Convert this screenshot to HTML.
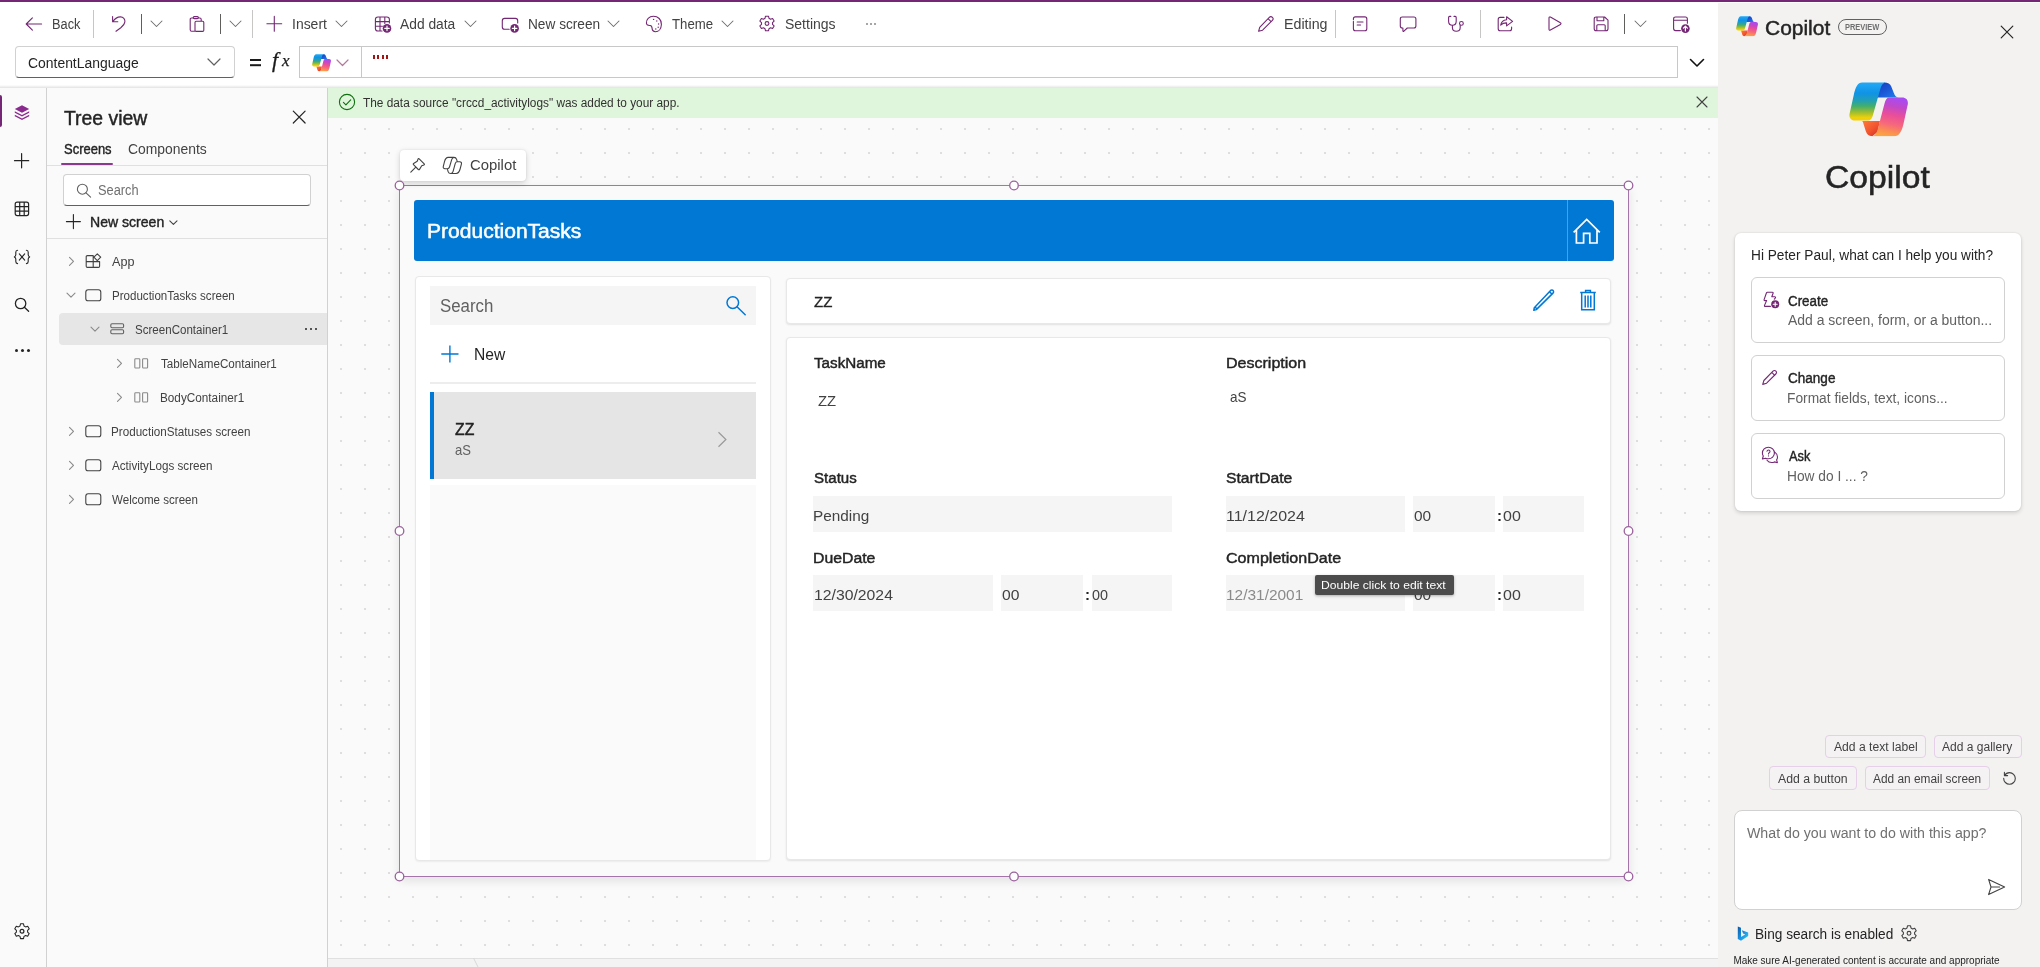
<!DOCTYPE html>
<html>
<head>
<meta charset="utf-8">
<title>Power Apps Studio</title>
<style>
*{box-sizing:border-box;margin:0;padding:0}
html,body{width:2040px;height:967px;overflow:hidden;background:#fff;font-family:"Liberation Sans",sans-serif;color:#242424}
.a{position:absolute}
.t{position:absolute;white-space:nowrap;line-height:1;transform-origin:0 0}
svg{position:absolute;overflow:visible}
.pi{fill:none;stroke:#742774;stroke-width:1.1;stroke-linecap:round;stroke-linejoin:round}
.gi{fill:none;stroke:#424242;stroke-width:1.2;stroke-linecap:round;stroke-linejoin:round}
.vsep{position:absolute;width:1px;background:#c8c6c4}
/* regions */
#topbar{left:0;top:0;width:2040px;height:2px;background:#742774}
#cmd{left:0;top:3px;width:1718px;height:43px;background:#fff}
#fx{left:0;top:46px;width:1718px;height:40px;background:#fff}
#rail{left:0;top:88px;width:47px;height:879px;background:#fafafa;border-right:1px solid #d1d1d1}
#tree{left:47px;top:88px;width:281px;height:879px;background:#fafafa;border-right:1px solid #d1d1d1}
#canvas{left:328px;top:88px;width:1390px;height:879px;background-color:#fafafa;background-image:radial-gradient(circle,#d2d2d2 0.55px,rgba(210,210,210,0) 1.05px);background-size:24px 24px;background-position:1px 5px}
#cop{left:1718px;top:3px;width:322px;height:964px;background:#f3f2f1}
</style>
</head>
<body>
<div id="root" style="position:absolute;left:0;top:0;width:2040px;height:967px;will-change:transform">
<div class="a" id="cmd"></div>
<div class="a" id="fx"></div>
<div class="a" id="rail"></div>
<div class="a" id="tree"></div>
<div class="a" id="canvas"></div>
<div class="a" id="cop"></div>
<div class="a" id="topbar"></div>
<!--CMD-->
<div id="cmdbar">
<!-- Back -->
<svg style="left:24px;top:14px" width="20" height="20" viewBox="0 0 20 20"><path class="pi" d="M17.6 10H2.6M8.4 3.8L2.2 10l6.2 6.2"/></svg>
<div class="t" style="left:51.5px;top:17px;font-size:14px;color:#424242;transform:scaleX(0.913)" id="tBack">Back</div>
<div class="vsep" style="left:93px;top:10px;height:28px"></div>
<!-- Undo -->
<svg style="left:109px;top:14px" width="20" height="20" viewBox="0 0 20 20"><path class="pi" d="M3.6 2.6v5.2h5.2M3.9 7.6c1.6-2.4 3.8-4.6 7.4-4.7 3-.1 4.9 2.300 4.600 5-.3 2.600-2.200 4.400-4.100 5.900L7 17.300"/></svg>
<div class="vsep" style="left:141px;top:14px;height:20px;background:#605e5c"></div>
<svg style="left:150px;top:20px" width="13" height="8" viewBox="0 0 13 8"><path class="gi" style="stroke:#6e6e6e;stroke-width:1.050" d="M1 1l5.500 5.500L12 1"/></svg>
<!-- Paste -->
<svg style="left:187px;top:14px" width="20" height="20" viewBox="0 0 20 20"><path class="pi" d="M6 4H4.600C3.700 4 3.200 4.500 3.200 5.400v10.400c0 .9.500 1.400 1.400 1.400H7.600M11.400 4h1.400c.9 0 1.400.5 1.400 1.400V6.800M7.200 2.600h3.200c.7 0 1 .4 1 1s-.3 1-1 1H7.200c-.7 0-1-.4-1-1s.3-1 1-1zM9.200 7.200h6.400c.8 0 1.200.4 1.200 1.200v7.800c0 .8-.4 1.200-1.200 1.200H9.200c-.8 0-1.200-.4-1.200-1.200V8.400c0-.8.400-1.200 1.200-1.200z"/></svg>
<div class="vsep" style="left:220px;top:14px;height:20px;background:#605e5c"></div>
<svg style="left:229px;top:20px" width="13" height="8" viewBox="0 0 13 8"><path class="gi" style="stroke:#6e6e6e;stroke-width:1.050" d="M1 1l5.500 5.500L12 1"/></svg>
<div class="vsep" style="left:252px;top:10px;height:28px"></div>
<!-- Insert -->
<svg style="left:264px;top:14px" width="20" height="20" viewBox="0 0 20 20"><path class="pi" d="M10.300 2.400v14.800M2.900 9.800h14.800"/></svg>
<div class="t" style="left:292.1px;top:17px;font-size:14px;color:#424242;transform:scaleX(0.997)" id="tInsert">Insert</div>
<svg style="left:335px;top:20px" width="13" height="8" viewBox="0 0 13 8"><path class="gi" style="stroke:#6e6e6e;stroke-width:1.050" d="M1 1l5.500 5.500L12 1"/></svg>
<!-- Add data -->
<svg style="left:373px;top:14px" width="20" height="20" viewBox="0 0 20 20"><path class="pi" d="M9 17H5c-1.700 0-2.600-.9-2.600-2.600V5.600C2.400 3.900 3.300 3 5 3h8.800c1.700 0 2.600.9 2.600 2.600V9M2.400 7.600h14M2.400 12.200h7M7 3v14M11.800 3v6.500"/><circle cx="14" cy="14.400" r="4.300" fill="#742774"/><path d="M14 12.200v4.400M11.800 14.400h4.400" stroke="#fff" stroke-width="1.200" stroke-linecap="round" fill="none"/></svg>
<div class="t" style="left:399.6px;top:17px;font-size:14px;color:#424242;transform:scaleX(0.986)" id="tAdd">Add data</div>
<svg style="left:464px;top:20px" width="13" height="8" viewBox="0 0 13 8"><path class="gi" style="stroke:#6e6e6e;stroke-width:1.050" d="M1 1l5.500 5.500L12 1"/></svg>
<!-- New screen -->
<svg style="left:500px;top:14px" width="20" height="20" viewBox="0 0 20 20"><path class="pi" d="M9.200 15.200H4.600c-1.500 0-2.300-.8-2.300-2.300V6.700c0-1.500.8-2.300 2.300-2.300h10.800c1.500 0 2.300.8 2.300 2.300V9"/><circle cx="14.600" cy="14.400" r="4.300" fill="#742774"/><path d="M14.600 12.200v4.400M12.400 14.400h4.400" stroke="#fff" stroke-width="1.200" stroke-linecap="round" fill="none"/></svg>
<div class="t" style="left:527.6px;top:17px;font-size:14px;color:#424242;transform:scaleX(0.976)" id="tNew">New screen</div>
<svg style="left:607px;top:20px" width="13" height="8" viewBox="0 0 13 8"><path class="gi" style="stroke:#6e6e6e;stroke-width:1.050" d="M1 1l5.500 5.500L12 1"/></svg>
<!-- Theme -->
<svg style="left:644px;top:14px" width="20" height="20" viewBox="0 0 20 20"><path class="pi" d="M2.400 9.200C2 5.400 5.200 2.200 9.400 2.200c4.600 0 8.200 3.400 8 8.200-.2 4.200-2.600 7.300-5.900 7.300-2.400 0-3.300-1.600-3.400-3.300-.1-1.700-.3-2.700-1.900-2.900-1.700-.2-3.600-.1-3.800-2.300z"/><circle cx="9.600" cy="5.400" r=".7" fill="#742774"/><circle cx="12.800" cy="7" r=".7" fill="#742774"/><circle cx="14.600" cy="10" r=".7" fill="#742774"/><circle cx="14.200" cy="13.200" r=".7" fill="#742774"/><circle cx="11.800" cy="15" r=".7" fill="#742774"/></svg>
<div class="t" style="left:672.0px;top:17px;font-size:14px;color:#424242;transform:scaleX(0.942)" id="tTheme">Theme</div>
<svg style="left:721px;top:20px" width="13" height="8" viewBox="0 0 13 8"><path class="gi" style="stroke:#6e6e6e;stroke-width:1.050" d="M1 1l5.500 5.500L12 1"/></svg>
<!-- Settings -->
<svg style="left:757px;top:14px" width="20" height="20" viewBox="0 0 20 20"><path class="pi" id="gearp" d="M8.500 2.200h3l.5 2.100 1.500.9 2.100-.7 1.500 2.600-1.600 1.500v1.800l1.600 1.500-1.500 2.600-2.100-.7-1.500.9-.5 2.100h-3l-.5-2.100-1.500-.9-2.100.7-1.500-2.600 1.600-1.500V8.600L2.900 7.100l1.500-2.600 2.100.7L8 4.300z"/><circle class="pi" cx="10" cy="9.500" r="1.900"/></svg>
<div class="t" style="left:785.0px;top:17px;font-size:14px;color:#424242;transform:scaleX(1.000)" id="tSet">Settings</div>
<div class="a" style="left:866px;top:23px;width:2px;height:2px;border-radius:1px;background:#8a8886;box-shadow:4px 0 0 #8a8886,8px 0 0 #8a8886"></div>
<!-- Editing -->
<svg style="left:1256px;top:14px" width="20" height="20" viewBox="0 0 20 20"><path class="pi" d="M13.300 3.300c.9-.9 2.200-.9 3.100 0s.9 2.200 0 3.100L6.600 16.200l-4 1.100 1.100-4zM12 4.600l3.100 3.100"/></svg>
<div class="t" style="left:1283.6px;top:17px;font-size:14px;color:#424242;transform:scaleX(1.017)" id="tEdit">Editing</div>
<div class="vsep" style="left:1335px;top:10px;height:28px"></div>
<!-- notes -->
<svg style="left:1350px;top:14px" width="20" height="20" viewBox="0 0 20 20"><path class="pi" d="M3.400 5.600v-.7c0-1.300.7-2 2-2h9.400c1.300 0 2 .7 2 2v9.800c0 1.300-.7 2-2 2H5.400c-1.300 0-2-.7-2-2V7.400M7.200 8h5.800M7.200 11h3.400"/></svg>
<!-- comment -->
<svg style="left:1398px;top:14px" width="20" height="20" viewBox="0 0 20 20"><path class="pi" d="M4.300 3h11.600c1.300 0 2 .7 2 2v7c0 1.300-.7 2-2 2H9.300l-3.400 3.200c-.5.400-1 .2-1-.4V14h-.6c-1.300 0-2-.7-2-2V5c0-1.300.7-2 2-2z"/></svg>
<!-- stethoscope -->
<svg style="left:1446px;top:14px" width="20" height="20" viewBox="0 0 20 20"><path class="pi" d="M4.800 2.400H3.600c-.7 0-1 .3-1 1v3.800c0 2.400 1.600 4 3.800 4s3.800-1.600 3.800-4V3.400c0-.7-.3-1-1-1H8M6.400 11.200v2.200c0 2.300 1.600 3.800 3.900 3.800s3.900-1.500 3.900-3.800v-2"/><circle class="pi" cx="15.400" cy="9.400" r="1.900"/></svg>
<div class="vsep" style="left:1480px;top:10px;height:28px"></div>
<!-- share -->
<svg style="left:1495px;top:14px" width="20" height="20" viewBox="0 0 20 20"><path class="pi" d="M9 3.400H5.200c-1.300 0-2 .7-2 2v9.400c0 1.300.7 2 2 2h9.400c1.300 0 2-.7 2-2V13M11.600 2.800v3c-3.300.2-5.400 2.100-5.900 5.400 1.600-1.700 3.500-2.400 5.900-2.300v3l6-4.500z"/></svg>
<!-- play -->
<svg style="left:1544px;top:14px" width="20" height="20" viewBox="0 0 20 20"><path class="pi" d="M5 3.900c0-.8.700-1.200 1.400-.8l10 5.600c.8.400.8 1.400 0 1.800l-10 5.600c-.7.400-1.400 0-1.400-.8z"/></svg>
<!-- save -->
<svg style="left:1591px;top:14px" width="20" height="20" viewBox="0 0 20 20"><path class="pi" d="M5.200 3h8.400l3.400 3.200v8.600c0 1.300-.7 2-2 2H5.200c-1.300 0-2-.7-2-2V5c0-1.300.7-2 2-2zM6 3v3.800h6.800V3M5.800 16.800v-5c0-.7.400-1 1-1h6.400c.7 0 1 .3 1 1v5"/></svg>
<div class="vsep" style="left:1624px;top:14px;height:20px;background:#605e5c"></div>
<svg style="left:1634px;top:20px" width="13" height="8" viewBox="0 0 13 8"><path class="gi" style="stroke:#6e6e6e;stroke-width:1.050" d="M1 1l5.500 5.500L12 1"/></svg>
<!-- publish -->
<svg style="left:1671px;top:14px" width="20" height="20" viewBox="0 0 20 20"><path class="pi" d="M9.400 16.600H4.600c-1.300 0-2-.7-2-2V5c0-1.300.7-2 2-2h9.800c1.300 0 2 .7 2 2v4.200M2.600 6.200h13.800"/><circle cx="14.400" cy="14.600" r="4.300" fill="#742774"/><path d="M14.400 17v-4.600M12.400 14.200l2-2 2 2" stroke="#fff" stroke-width="1.200" stroke-linecap="round" stroke-linejoin="round" fill="none"/></svg>
</div>

<!--FX-->
<svg width="0" height="0" style="left:0;top:0"><defs>
<linearGradient id="gB" x1="0" y1="0" x2="0" y2="1"><stop offset="0" stop-color="#22a9f6"/><stop offset=".28" stop-color="#0f93e6"/><stop offset=".48" stop-color="#22a0b4"/><stop offset=".62" stop-color="#42ae6e"/><stop offset=".78" stop-color="#9cbd30"/><stop offset=".92" stop-color="#ecd00c"/><stop offset="1" stop-color="#f6d000"/></linearGradient>
<linearGradient id="gA" x1="0" y1="0" x2="1" y2="1"><stop offset="0" stop-color="#1538b8"/><stop offset=".6" stop-color="#1c5fdc"/><stop offset="1" stop-color="#1f86ea"/></linearGradient>
<linearGradient id="gD" x1=".6" y1="0" x2=".4" y2="1"><stop offset="0" stop-color="#a84bf2"/><stop offset=".22" stop-color="#c248c8"/><stop offset=".45" stop-color="#ea4f97"/><stop offset=".68" stop-color="#f6687c"/><stop offset=".88" stop-color="#fb9050"/><stop offset="1" stop-color="#fca440"/></linearGradient>
<linearGradient id="gC" x1="0" y1="0" x2="1" y2="1"><stop offset="0" stop-color="#ff7c3c"/><stop offset=".55" stop-color="#f2552e"/><stop offset="1" stop-color="#cf2a26"/></linearGradient>
<symbol id="coplogo" viewBox="0 0 60 55.600">
<path fill="url(#gA)" d="M36 .4C39.500 .4 42 2 43 4.500L45.500 11C46.500 13.800 47.500 15.600 50.500 15.900H27L31 3z"/>
<path fill="url(#gC)" d="M13.300 39.600H31.500L29 51L23.700 55.200C20 55.200 18 53 17 50L15 43.500C14.500 41.500 14 40 13.300 39.600z"/>
<path fill="url(#gB)" d="M13.300 .4H37C34.500 1 33 3 32 6.500L24.500 33C23.500 37 22 39.300 18.500 39.300H6C2 39.300-.2 36.500.5 32.500L4.800 13.300C6.500 5 9 .4 13.300 .4z"/>
<path fill="url(#gD)" d="M40.500 15.900H54C58.500 15.900 60.500 19 59.800 23L55.500 42.500C53.500 51 51 55.200 46 55.200H23.700C26.500 54.500 28 52.500 29 49L36 22.500C37 18.500 38.500 15.900 40.500 15.900z"/>
</symbol>
</defs></svg>
<div class="a" style="left:0;top:85px;width:1718px;height:3px;background:linear-gradient(#fff,#e2e2e2)"></div>
<div class="a" style="left:15px;top:46px;width:220px;height:32px;border:1px solid #d1d1d1;border-bottom-color:#616161;border-radius:4px;background:#fff"></div>
<div class="t" style="left:27.6px;top:56px;font-size:14px;color:#242424;transform:scaleX(0.994)" id="tCL">ContentLanguage</div>
<svg style="left:207px;top:58px" width="14" height="9" viewBox="0 0 14 9"><path class="gi" style="stroke:#616161" d="M1 1l6 6 6-6"/></svg>
<div class="a" style="left:249.500px;top:59.300px;width:11.500px;height:1.800px;background:#1b1b1b;box-shadow:0 5.200px 0 #1b1b1b"></div>
<div class="t" style="left:272px;top:49px;font-family:'Liberation Serif',serif;font-style:italic;font-size:22px;color:#1b1b1b;-webkit-text-stroke:.3px #1b1b1b" id="tF">f</div>
<div class="t" style="left:282px;top:51.500px;font-family:'Liberation Serif',serif;font-style:italic;font-size:17px;color:#1b1b1b;-webkit-text-stroke:.25px #1b1b1b" id="tX">x</div>
<div class="a" style="left:299px;top:46px;width:1379px;height:32px;border:1px solid #c8c8c8;background:#fff"></div>
<div class="a" style="left:361px;top:47px;width:1px;height:30px;background:#c8c8c8"></div>
<svg style="left:312px;top:54px" width="19" height="17.600"><use href="#coplogo"/></svg>
<svg style="left:336px;top:59px" width="13" height="8" viewBox="0 0 13 8"><path d="M1 1l5.500 5.500L12 1" fill="none" stroke="#b4789c" stroke-width="1.200" stroke-linecap="round" stroke-linejoin="round"/></svg>
<div class="a" style="left:373px;top:55px;width:2px;height:4px;background:#a31515;box-shadow:4px 0 0 #a31515,9px 0 0 #a31515,13px 0 0 #a31515"></div>
<svg style="left:1689px;top:58px" width="16" height="10" viewBox="0 0 16 10"><path d="M1.500 1.500L8 8l6.500-6.500" fill="none" stroke="#111" stroke-width="1.600" stroke-linecap="round" stroke-linejoin="round"/></svg>

<!--RAIL-->
<div class="a" style="left:0;top:95px;width:2px;height:32px;background:#742774;border-radius:0 2px 2px 0"></div>
<svg style="left:14px;top:105px" width="16" height="16" viewBox="0 0 16 16"><path fill="#8a2a8e" d="M8 .3l7.200 3.700L8 7.700.8 4zM.8 6.300L8 10l7.200-3.700v1.500L8 11.500.8 7.800zM.8 9.800L8 13.500l7.200-3.700v1.500L8 15 .8 11.300z"/></svg>
<svg style="left:13px;top:152px" width="18" height="18" viewBox="0 0 18 18"><path class="gi" style="stroke:#242424" d="M8.600 1.600v14.200M1.500 8.700h14.200"/></svg>
<svg style="left:14px;top:201px" width="16" height="16" viewBox="0 0 16 16"><path class="gi" style="stroke:#242424" d="M3.200 1.200h9.400c1.300 0 2 .7 2 2v9.400c0 1.300-.7 2-2 2H3.200c-1.300 0-2-.7-2-2V3.200c0-1.300.7-2 2-2zM1.200 5.700h13.400M1.200 10.200h13.400M5.700 1.200v13.400M10.200 1.200v13.400"/></svg>
<svg style="left:13px;top:249px" width="18" height="16" viewBox="0 0 18 16"><path class="gi" style="stroke:#242424;stroke-width:1.100" d="M4.600 1.200C3.200 1.200 2.800 2 2.800 3.200v2.600c0 1-.5 1.700-1.500 2.100 1 .4 1.500 1.100 1.500 2.100v2.600c0 1.200.4 2 1.800 2M13.400 1.200c1.400 0 1.800.8 1.800 2v2.600c0 1 .5 1.700 1.500 2.100-1 .4-1.500 1.100-1.500 2.100v2.600c0 1.200-.4 2-1.800 2M6.300 4.800l5.400 6.300M11.700 4.800l-5.400 6.300"/></svg>
<svg style="left:14px;top:297px" width="16" height="16" viewBox="0 0 16 16"><circle class="gi" style="stroke:#242424;stroke-width:1.300" cx="6.600" cy="6.500" r="5.200"/><path class="gi" style="stroke:#242424;stroke-width:1.300" d="M10.400 10.300l4.200 4"/></svg>
<div class="a" style="left:15px;top:349px;width:3px;height:3px;border-radius:2px;background:#242424;box-shadow:6px 0 0 #242424,12px 0 0 #242424"></div>
<svg style="left:12px;top:922px" width="20" height="20" viewBox="0 0 20 20"><path class="gi" style="stroke:#242424;stroke-width:1.050" d="M8.500 1.800h3l.5 2.200 1.600.9 2.100-.7 1.500 2.600-1.600 1.500v1.800l1.600 1.500-1.500 2.600-2.100-.7-1.600.9-.5 2.200h-3l-.5-2.200-1.600-.9-2.100.7-1.500-2.600 1.600-1.500V8.300L2.800 6.800l1.500-2.600 2.100.7L8 4z"/><circle class="gi" style="stroke:#242424" cx="10" cy="9.300" r="1.900"/></svg>

<!--TREE-->
<div class="t" style="left:63.6px;top:108px;font-size:20px;color:#242424;-webkit-text-stroke:.45px #242424;transform:scaleX(0.969)" id="tTV">Tree view</div>
<svg style="left:292px;top:110px" width="14" height="14" viewBox="0 0 14 14"><path class="gi" style="stroke:#242424;stroke-width:1.200" d="M1.300 1.200l11.800 11.800M13.100 1.200L1.300 13"/></svg>
<div class="t" style="left:63.6px;top:142px;font-size:14px;color:#242424;-webkit-text-stroke:.4px #242424;transform:scaleX(0.927)" id="tScr">Screens</div>
<div class="t" style="left:128.4px;top:142px;font-size:14px;color:#424242;transform:scaleX(0.992)" id="tCmp">Components</div>
<div class="a" style="left:61px;top:163px;width:52px;height:2px;background:#8a3a8e;border-radius:1px"></div>
<div class="a" style="left:47px;top:165px;width:280px;height:1px;background:#e0e0e0"></div>
<div class="a" style="left:63px;top:174px;width:248px;height:32px;border:1px solid #d1d1d1;border-bottom-color:#616161;border-radius:4px;background:#fff"></div>
<svg style="left:76px;top:183px" width="16" height="16" viewBox="0 0 16 16"><circle class="gi" style="stroke:#616161;stroke-width:1.100" cx="6.400" cy="6.200" r="5"/><path class="gi" style="stroke:#616161;stroke-width:1.100" d="M10 9.800l4.600 4.400"/></svg>
<div class="t" style="left:97.8px;top:183px;font-size:14px;color:#707070;transform:scaleX(0.916)" id="tSrch">Search</div>
<svg style="left:65px;top:213px" width="17" height="17" viewBox="0 0 17 17"><path class="gi" style="stroke:#242424;stroke-width:1.100" d="M8.400 1.600v14M1.400 8.600h14"/></svg>
<div class="t" style="left:89.6px;top:215px;font-size:14px;color:#242424;-webkit-text-stroke:.4px #242424;transform:scaleX(1.004)" id="tNS2">New screen</div>
<svg style="left:169px;top:220px" width="9" height="6" viewBox="0 0 9 6"><path class="gi" style="stroke:#424242;stroke-width:1.100" d="M.8.800l3.600 3.600L8 .8"/></svg>
<div class="a" style="left:47px;top:238px;width:280px;height:1px;background:#e0e0e0"></div>
<!-- rows -->
<div class="a" style="left:59px;top:313px;width:268px;height:32px;background:#e6e6e6;border-radius:4px 0 0 4px"></div>
<!-- row1 App -->
<svg style="left:68px;top:256px" width="7" height="11" viewBox="0 0 7 11"><path class="gi" style="stroke:#8a8a8a;stroke-width:1.100" d="M1.500 1.400l4 4-4 4"/></svg>
<svg style="left:85px;top:253px" width="17" height="16" viewBox="0 0 17 16"><path class="gi" style="stroke:#424242;stroke-width:1.100" d="M8.200 2.600H2.400c-.8 0-1.200.4-1.200 1.200v9.400c0 .8.400 1.200 1.200 1.200h11c.8 0 1.200-.4 1.200-1.200V8.600M1.200 8.600h13.400M8.200 2.600v11.800M12.300.8l3.400 3.400-3.400 3.400-3.400-3.400z"/></svg>
<div class="t" style="left:111.6px;top:256px;font-size:12px;color:#424242;transform:scaleX(1.050)" id="tApp">App</div>
<!-- row2 -->
<svg style="left:66px;top:292px" width="10" height="7" viewBox="0 0 10 7"><path class="gi" style="stroke:#8a8a8a;stroke-width:1.100" d="M1 1.200l4 4 4-4"/></svg>
<svg style="left:85px;top:289px" width="17" height="13" viewBox="0 0 17 13"><rect class="gi" style="stroke:#424242;stroke-width:1.100" x=".8" y=".8" width="15" height="11" rx="2.400"/></svg>
<div class="t" style="left:112.0px;top:290px;font-size:12px;color:#424242;transform:scaleX(0.964)" id="tPT">ProductionTasks screen</div>
<!-- row3 -->
<svg style="left:90px;top:326px" width="10" height="7" viewBox="0 0 10 7"><path class="gi" style="stroke:#8a8a8a;stroke-width:1.100" d="M1 1.200l4 4 4-4"/></svg>
<svg style="left:110px;top:323px" width="15" height="12" viewBox="0 0 15 12"><rect class="gi" style="stroke:#616161;stroke-width:1.100" x=".8" y=".8" width="12.800" height="4" rx="1.200"/><rect class="gi" style="stroke:#616161;stroke-width:1.100" x=".8" y="6.800" width="12.800" height="4" rx="1.200"/></svg>
<div class="t" style="left:135.2px;top:324px;font-size:12px;color:#424242;transform:scaleX(0.964)" id="tSC">ScreenContainer1</div>
<div class="a" style="left:305px;top:328px;width:2px;height:2px;border-radius:1px;background:#242424;box-shadow:5px 0 0 #242424,10px 0 0 #242424"></div>
<!-- row4 -->
<svg style="left:116px;top:358px" width="7" height="11" viewBox="0 0 7 11"><path class="gi" style="stroke:#8a8a8a;stroke-width:1.100" d="M1.500 1.400l4 4-4 4"/></svg>
<svg style="left:134px;top:358px" width="15" height="11" viewBox="0 0 15 11"><rect class="gi" style="stroke:#8a8a8a;stroke-width:1.100" x=".8" y=".8" width="5" height="9.200" rx=".8"/><rect class="gi" style="stroke:#8a8a8a;stroke-width:1.100" x="8.600" y=".8" width="5" height="9.200" rx=".8"/></svg>
<div class="t" style="left:160.8px;top:358px;font-size:12px;color:#424242;transform:scaleX(0.970)" id="tTN">TableNameContainer1</div>
<!-- row5 -->
<svg style="left:116px;top:392px" width="7" height="11" viewBox="0 0 7 11"><path class="gi" style="stroke:#8a8a8a;stroke-width:1.100" d="M1.500 1.400l4 4-4 4"/></svg>
<svg style="left:134px;top:392px" width="15" height="11" viewBox="0 0 15 11"><rect class="gi" style="stroke:#8a8a8a;stroke-width:1.100" x=".8" y=".8" width="5" height="9.200" rx=".8"/><rect class="gi" style="stroke:#8a8a8a;stroke-width:1.100" x="8.600" y=".8" width="5" height="9.200" rx=".8"/></svg>
<div class="t" style="left:159.8px;top:392px;font-size:12px;color:#424242;transform:scaleX(0.979)" id="tBC">BodyContainer1</div>
<!-- row6 -->
<svg style="left:68px;top:426px" width="7" height="11" viewBox="0 0 7 11"><path class="gi" style="stroke:#8a8a8a;stroke-width:1.100" d="M1.500 1.400l4 4-4 4"/></svg>
<svg style="left:85px;top:425px" width="17" height="13" viewBox="0 0 17 13"><rect class="gi" style="stroke:#424242;stroke-width:1.100" x=".8" y=".8" width="15" height="11" rx="2.400"/></svg>
<div class="t" style="left:111.4px;top:426px;font-size:12px;color:#424242;transform:scaleX(0.972)" id="tPS">ProductionStatuses screen</div>
<!-- row7 -->
<svg style="left:68px;top:460px" width="7" height="11" viewBox="0 0 7 11"><path class="gi" style="stroke:#8a8a8a;stroke-width:1.100" d="M1.500 1.400l4 4-4 4"/></svg>
<svg style="left:85px;top:459px" width="17" height="13" viewBox="0 0 17 13"><rect class="gi" style="stroke:#424242;stroke-width:1.100" x=".8" y=".8" width="15" height="11" rx="2.400"/></svg>
<div class="t" style="left:112.4px;top:460px;font-size:12px;color:#424242;transform:scaleX(0.972)" id="tAL">ActivityLogs screen</div>
<!-- row8 -->
<svg style="left:68px;top:494px" width="7" height="11" viewBox="0 0 7 11"><path class="gi" style="stroke:#8a8a8a;stroke-width:1.100" d="M1.500 1.400l4 4-4 4"/></svg>
<svg style="left:85px;top:493px" width="17" height="13" viewBox="0 0 17 13"><rect class="gi" style="stroke:#424242;stroke-width:1.100" x=".8" y=".8" width="15" height="11" rx="2.400"/></svg>
<div class="t" style="left:112.4px;top:494px;font-size:12px;color:#424242;transform:scaleX(0.964)" id="tWS">Welcome screen</div>

<!--CANVAS-->
<div class="a" style="left:328px;top:88px;width:1390px;height:30px;background:#dff6dd"></div>
<svg style="left:338px;top:93px" width="18" height="18" viewBox="0 0 18 18"><circle cx="9" cy="9" r="7.600" fill="none" stroke="#0e700e" stroke-width="1.100"/><path d="M5.400 9.300l2.500 2.500 4.800-5" fill="none" stroke="#0e700e" stroke-width="1.100" stroke-linecap="round" stroke-linejoin="round"/></svg>
<div class="t" style="left:363.4px;top:97px;font-size:12px;color:#323130;transform:scaleX(0.987)" id="tNote">The data source "crccd_activitylogs" was added to your app.</div>
<svg style="left:1696px;top:96px" width="12" height="12" viewBox="0 0 12 12"><path class="gi" style="stroke:#424242;stroke-width:1.100" d="M1 1l10 10M11 1L1 11"/></svg>
<div class="a" style="left:328px;top:958px;width:1390px;height:9px;background:#f3f3f3;border-top:1px solid #e0e0e0"></div>
<svg style="left:470px;top:958px" width="10" height="9" viewBox="0 0 10 9"><path d="M3.500 0L8 9" stroke="#d8d8d8" stroke-width="1" fill="none"/></svg>
<!-- app screen -->
<div class="a" style="left:399px;top:185px;width:1230px;height:692px;background:#fafafa;border:1px solid #a574a8;box-shadow:0 4px 10px rgba(0,0,0,.10)"></div>
<!-- floating toolbar -->
<div class="a" style="left:400px;top:150px;width:126px;height:31px;background:#fff;border-radius:4px;box-shadow:0 2px 6px rgba(0,0,0,.16),0 0 2px rgba(0,0,0,.10)"></div>
<svg style="left:409px;top:157px" width="17" height="17" viewBox="0 0 17 17"><path class="gi" style="stroke:#424242;stroke-width:1.100" d="M10.200 1.800l5 5c.4.400.3.900-.2 1.100l-2.300.9-2.200 3.600c-.3.500-.8.500-1.200.1L4.500 7.700c-.4-.4-.4-.9.100-1.200l3.600-2.200.9-2.300c.2-.5.700-.6 1.100-.2zM6.800 10.200l-5 5"/></svg>
<svg style="left:443px;top:156px" width="19" height="19" viewBox="0 0 19 19"><path class="gi" style="stroke:#424242;stroke-width:1.100" d="M5.200 1.400h5.800c1.300 0 2.200.7 2.600 1.900l.7 2.400h2.400c1.400 0 2.100 1 1.700 2.400l-1.300 4.900c-.7 2.700-1.700 4.500-4 4.500H7.800c-1.300 0-2.300-.7-2.700-1.900l-.8-2.900H2c-1.400 0-2.100-1-1.700-2.400l1.200-4.700C2.200 2.900 3.300 1.400 5.200 1.400zM11 1.400c-1.200 0-1.900.9-2.300 2.200L6.500 11c-.3 1.100-1 1.700-2.200 1.700M7.800 17.500c1.200 0 1.900-.9 2.300-2.200l2.100-7.700c.3-1.100 1-1.900 2.200-1.900"/></svg>
<div class="t" style="left:469.5px;top:158px;font-size:14px;color:#424242;transform:scaleX(1.062)" id="tCop1">Copilot</div>

<!--APP-->
<div id="app">
<div class="a" style="left:414px;top:200px;width:1200px;height:61px;background:#0078d4;border-radius:3px"></div>
<div class="a" style="left:1567px;top:200px;width:1px;height:61px;background:#4aa0e4"></div>
<div class="t" style="left:427.2px;top:221.3px;font-size:20px;color:#fff;-webkit-text-stroke:.5px #fff;transform:scaleX(1.052)" id="tPTh">ProductionTasks</div>
<svg style="left:1572px;top:217px" width="30" height="28" viewBox="0 0 30 28"><path d="M2.200 14.800L14.700 2.400l12.500 12.400M4.400 13v13h7.200v-9.600h6.200V26H25V13" fill="none" stroke="#fff" stroke-width="1.700" stroke-linejoin="miter" stroke-linecap="square"/></svg>
<!-- left panel -->
<div class="a" style="left:415px;top:276px;width:356px;height:585px;background:#fff;border:1px solid #e8e8e8;border-radius:4px;box-shadow:0 1px 2px rgba(0,0,0,.06)"></div>
<div class="a" style="left:430px;top:286px;width:326px;height:39px;background:#f5f5f5"></div>
<div class="t" style="left:440.0px;top:298px;font-size:17.500px;color:#616161;transform:scaleX(0.963)" id="tS2">Search</div>
<svg style="left:725px;top:295px" width="22" height="22" viewBox="0 0 22 22"><circle cx="7.800" cy="7.600" r="5.800" fill="none" stroke="#0078d4" stroke-width="1.500"/><path d="M12 11.800l8.200 8" fill="none" stroke="#0078d4" stroke-width="1.500" stroke-linecap="round"/></svg>
<svg style="left:440px;top:344px" width="20" height="20" viewBox="0 0 20 20"><path d="M9.900 1.400v17.200M1.300 10h17.200" fill="none" stroke="#0078d4" stroke-width="1.400"/></svg>
<div class="t" style="left:473.7px;top:346px;font-size:17px;color:#242424;transform:scaleX(0.918)" id="tNew2">New</div>
<div class="a" style="left:430px;top:382px;width:326px;height:2px;background:#ededed"></div>
<div class="a" style="left:430px;top:392px;width:326px;height:87px;background:#e5e5e5"></div>
<div class="a" style="left:430px;top:392px;width:4px;height:87px;background:#0078d4"></div>
<div class="t" style="left:455.0px;top:420.6px;font-size:17px;color:#242424;-webkit-text-stroke:.5px #242424;transform:scaleX(0.929)" id="tZZ1">ZZ</div>
<div class="t" style="left:455.0px;top:443px;font-size:14.500px;color:#616161;transform:scaleX(0.900)" id="taS1">aS</div>
<svg style="left:717px;top:431px" width="11" height="17" viewBox="0 0 11 17"><path d="M1.500 1.300l7.400 7.200-7.400 7.200" fill="none" stroke="#9a9a9a" stroke-width="1.200"/></svg>
<div class="a" style="left:430px;top:485px;width:326px;height:375px;background:#fafafa"></div>
<!-- title panel -->
<div class="a" style="left:786px;top:277.500px;width:825px;height:46px;background:#fff;border:1px solid #e8e8e8;border-radius:4px;box-shadow:0 1px 2px rgba(0,0,0,.10)"></div>
<div class="t" style="left:813.7px;top:293.6px;font-size:15.5px;color:#242424;-webkit-text-stroke:.35px #242424;transform:scaleX(0.968)" id="tZZ2">ZZ</div>
<svg style="left:1531px;top:288px" width="25" height="25" viewBox="0 0 25 25"><path d="M19.600 2.400c.8-.7 1.900-.6 2.600.2.600.8.500 1.800-.2 2.500L5.300 21.600l-2.500.7.500-2.600zM18.400 3.600l2.600 2.700M4 19l2 2" fill="none" stroke="#0078d4" stroke-width="1.500" stroke-linejoin="round" stroke-linecap="round"/></svg>
<svg style="left:1579px;top:289px" width="18" height="23" viewBox="0 0 18 23"><path d="M1.200 3.400h15.600M6.600 3.200V1.600h4.800v1.600M2.700 3.600v17.200h12.600V3.600M6.200 6.400v12M9 6.400v12M11.800 6.400v12" fill="none" stroke="#0078d4" stroke-width="1.500"/></svg>
<!-- form panel -->
<div class="a" style="left:786px;top:337px;width:825px;height:523px;background:#fff;border:1px solid #e8e8e8;border-radius:4px;box-shadow:0 1px 2px rgba(0,0,0,.10)"></div>
<div class="t" style="left:813.7px;top:355.3px;font-size:15.5px;color:#242424;-webkit-text-stroke:.45px #242424;transform:scaleX(0.981)" id="tTN2">TaskName</div>
<div class="t" style="left:817.6px;top:393.2px;font-size:15.5px;color:#424242;transform:scaleX(0.956)" id="tZZ3">ZZ</div>
<div class="t" style="left:1225.9px;top:355.3px;font-size:15.5px;color:#242424;-webkit-text-stroke:.45px #242424;transform:scaleX(1.034)" id="tDesc">Description</div>
<div class="t" style="left:1230.2px;top:388.8px;font-size:15px;color:#424242;transform:scaleX(0.900)" id="taS2">aS</div>
<div class="t" style="left:813.6px;top:469.7px;font-size:15.5px;color:#242424;-webkit-text-stroke:.45px #242424;transform:scaleX(0.973)" id="tStat">Status</div>
<div class="a" style="left:813px;top:496px;width:359px;height:36px;background:#f5f5f5"></div>
<div class="t" style="left:813.2px;top:508.1px;font-size:15.5px;color:#424242;transform:scaleX(0.989)" id="tPend">Pending</div>
<div class="t" style="left:1226.2px;top:469.7px;font-size:15.5px;color:#242424;-webkit-text-stroke:.45px #242424;transform:scaleX(1.012)" id="tSD">StartDate</div>
<div class="a" style="left:1226px;top:496px;width:179px;height:36px;background:#f5f5f5"></div>
<div class="a" style="left:1413px;top:496px;width:82px;height:36px;background:#f5f5f5"></div>
<div class="a" style="left:1503px;top:496px;width:81px;height:36px;background:#f5f5f5"></div>
<div class="t" style="left:1226.0px;top:508.1px;font-size:15.5px;color:#424242;transform:scaleX(1.031)" id="tD1">11/12/2024</div>
<div class="t" style="left:1413.7px;top:508.1px;font-size:15.5px;color:#424242;transform:scaleX(0.994)" id="tH1">00</div>
<div class="t" style="left:1497px;top:508px;font-size:15px;color:#242424;font-weight:bold" id="tC1">:</div>
<div class="t" style="left:1502.7px;top:508.1px;font-size:15.5px;color:#424242;transform:scaleX(1.031)" id="tM1">00</div>
<div class="t" style="left:812.6px;top:549.9px;font-size:15.5px;color:#242424;-webkit-text-stroke:.45px #242424;transform:scaleX(1.020)" id="tDue">DueDate</div>
<div class="a" style="left:813px;top:575px;width:180px;height:36px;background:#f5f5f5"></div>
<div class="a" style="left:1001px;top:575px;width:82px;height:36px;background:#f5f5f5"></div>
<div class="a" style="left:1092px;top:575px;width:80px;height:36px;background:#f5f5f5"></div>
<div class="t" style="left:813.9px;top:587.4px;font-size:15.5px;color:#424242;transform:scaleX(1.017)" id="tD2">12/30/2024</div>
<div class="t" style="left:1001.6px;top:587.4px;font-size:15.5px;color:#424242;transform:scaleX(1.012)" id="tH2">00</div>
<div class="t" style="left:1085px;top:587px;font-size:15px;color:#242424;font-weight:bold" id="tC2">:</div>
<div class="t" style="left:1092.0px;top:587.4px;font-size:15.5px;color:#424242;transform:scaleX(0.929)" id="tM2">00</div>
<div class="t" style="left:1226.0px;top:549.9px;font-size:15.5px;color:#242424;-webkit-text-stroke:.45px #242424;transform:scaleX(1.036)" id="tCD">CompletionDate</div>
<div class="a" style="left:1226px;top:575px;width:179px;height:36px;background:#f5f5f5"></div>
<div class="a" style="left:1413px;top:575px;width:82px;height:36px;background:#f5f5f5"></div>
<div class="a" style="left:1503px;top:575px;width:81px;height:36px;background:#f5f5f5"></div>
<div class="t" style="left:1226.4px;top:587.4px;font-size:15.5px;color:#8a8a8a;transform:scaleX(0.996)" id="tD3">12/31/2001</div>
<div class="t" style="left:1413.7px;top:587.4px;font-size:15.5px;color:#424242;transform:scaleX(0.994)" id="tH3">00</div>
<div class="t" style="left:1497px;top:587px;font-size:15px;color:#242424;font-weight:bold" id="tC3">:</div>
<div class="t" style="left:1502.7px;top:587.4px;font-size:15.5px;color:#424242;transform:scaleX(1.031)" id="tM3">00</div>
<div class="a" style="left:1315px;top:575px;width:139px;height:20px;background:#4c4c4c;border-radius:2px;box-shadow:0 1px 3px rgba(0,0,0,.3)"></div>
<div class="t" style="left:1321.4px;top:580px;font-size:11px;color:#fff;transform:scaleX(1.102)" id="tTip">Double click to edit text</div>
</div>
<!-- selection handles -->
<svg style="left:0;top:0" width="2040" height="967" viewBox="0 0 2040 967"><g fill="#fff" stroke="#9a629c" stroke-width="1.300"><circle cx="399.500" cy="185.500" r="4.300"/><circle cx="1014" cy="185.500" r="4.300"/><circle cx="1628.500" cy="185.500" r="4.300"/><circle cx="399.500" cy="531" r="4.300"/><circle cx="1628.500" cy="531" r="4.300"/><circle cx="399.500" cy="876.500" r="4.300"/><circle cx="1014" cy="876.500" r="4.300"/><circle cx="1628.500" cy="876.500" r="4.300"/></g></svg>

<!--COP-->
<div id="coppane">
<svg style="left:1736px;top:16px" width="22" height="20.600"><use href="#coplogo"/></svg>
<div class="t" style="left:1765.2px;top:17.8px;font-size:20px;color:#242424;-webkit-text-stroke:.45px #242424;transform:scaleX(1.048)" id="tCopH">Copilot</div>
<div class="a" style="left:1838px;top:19px;width:49px;height:16px;border:1px solid #616161;border-radius:8px"></div>
<div class="t" style="left:1845.0px;top:22.8px;font-size:8.5px;font-weight:bold;color:#707070;transform:scaleX(0.875)" id="tPrev">PREVIEW</div>
<svg style="left:2000px;top:25px" width="14" height="14" viewBox="0 0 14 14"><path class="gi" style="stroke:#242424;stroke-width:1.200" d="M1.200 1.200l11.600 11.600M12.800 1.200L1.200 12.800"/></svg>
<svg style="left:1848.500px;top:81.500px" width="59" height="54.600"><use href="#coplogo"/></svg>
<div class="t" style="left:1825.1px;top:162.4px;font-size:31px;color:#242424;-webkit-text-stroke:.5px #242424;transform:scaleX(1.086)" id="tCopB">Copilot</div>
<!-- card -->
<div class="a" style="left:1735px;top:233px;width:286px;height:278px;background:#fff;border-radius:6px;box-shadow:0 2px 4px rgba(0,0,0,.14),0 0 2px rgba(0,0,0,.12)"></div>
<div class="t" style="left:1751.0px;top:248px;font-size:14px;color:#242424;transform:scaleX(0.978)" id="tHi">Hi Peter Paul, what can I help you with?</div>
<div class="a" style="left:1751px;top:277px;width:254px;height:66px;border:1px solid #d1d1d1;border-radius:6px;background:#fff"></div>
<div class="a" style="left:1751px;top:355px;width:254px;height:66px;border:1px solid #d1d1d1;border-radius:6px;background:#fff"></div>
<div class="a" style="left:1751px;top:433px;width:254px;height:66px;border:1px solid #d1d1d1;border-radius:6px;background:#fff"></div>
<!-- create icon -->
<svg style="left:1762px;top:291px" width="18" height="18" viewBox="0 0 18 18"><path class="pi" style="stroke-width:1.100" d="M8.400 15.400H3.200c-.6 0-.9-.5-.7-1L4.600 9.600H2.800c-.6 0-.9-.5-.7-1L4.400 2c.2-.5.500-.7 1-.7h5c.6 0 .9.500.7 1L9.800 5.800h3c.7 0 1 .7.500 1.200l-1 1.100"/><circle cx="13.200" cy="13.200" r="4" fill="#742774"/><path d="M13.200 11.200v4M11.200 13.200h4" stroke="#fff" stroke-width="1.100" stroke-linecap="round" fill="none"/></svg>
<div class="t" style="left:1788.2px;top:293.6px;font-size:14px;color:#242424;-webkit-text-stroke:.4px #242424;transform:scaleX(0.955)" id="tCr">Create</div>
<div class="t" style="left:1788.2px;top:313px;font-size:14px;color:#616161;transform:scaleX(0.997)" id="tCr2">Add a screen, form, or a button...</div>
<!-- change icon -->
<svg style="left:1761px;top:369px" width="18" height="18" viewBox="0 0 18 18"><path class="pi" style="stroke-width:1.100" d="M12 2.200c.9-.9 2.100-.9 2.900-.1.800.8.800 2-.1 2.900L5.600 14.200l-3.900 1.200 1.200-3.900zM10.800 3.400l2.900 2.900"/></svg>
<div class="t" style="left:1788.2px;top:371px;font-size:14px;color:#242424;-webkit-text-stroke:.4px #242424;transform:scaleX(0.967)" id="tCh">Change</div>
<div class="t" style="left:1787.2px;top:391px;font-size:14px;color:#616161;transform:scaleX(0.983)" id="tCh2">Format fields, text, icons...</div>
<!-- ask icon -->
<svg style="left:1761px;top:446px" width="18" height="18" viewBox="0 0 18 18"><path class="pi" style="stroke-width:1.100" d="M7.400 1.200c3.400 0 6 2.500 6 5.800s-2.600 5.800-6 5.800c-1 0-2-.2-2.800-.6L1.400 13l.9-3C1.700 9.100 1.400 8.100 1.400 7c0-3.300 2.600-5.800 6-5.800zM6 5.300c.1-.8.700-1.300 1.500-1.300.9 0 1.500.6 1.500 1.400 0 1.200-1.500 1.300-1.500 2.600M7.500 9.800v.1M6 14.200c1 1.400 2.700 2.300 4.700 2.300 1 0 1.900-.2 2.700-.6l3 .8-.8-2.800c.6-.9.900-1.900.9-3 0-1.900-1-3.500-2.500-4.500"/></svg>
<div class="t" style="left:1788.9px;top:449px;font-size:14px;color:#242424;-webkit-text-stroke:.4px #242424;transform:scaleX(0.912)" id="tAsk">Ask</div>
<div class="t" style="left:1787.2px;top:469px;font-size:14px;color:#616161;transform:scaleX(0.981)" id="tAsk2">How do I ... ?</div>
<!-- chips -->
<div class="a" style="left:1825px;top:734.500px;width:101px;height:23px;border:1px solid #e6cfe8;border-radius:4px;background:#f5f2f4"></div>
<div class="t" style="left:1833.6px;top:741px;font-size:12px;color:#424242;transform:scaleX(1.011)" id="tK1">Add a text label</div>
<div class="a" style="left:1934px;top:734.500px;width:88px;height:23px;border:1px solid #e6cfe8;border-radius:4px;background:#f5f2f4"></div>
<div class="t" style="left:1942.4px;top:741px;font-size:12px;color:#424242;transform:scaleX(1.003)" id="tK2">Add a gallery</div>
<div class="a" style="left:1769px;top:766px;width:88px;height:24px;border:1px solid #e6cfe8;border-radius:4px;background:#f5f2f4"></div>
<div class="t" style="left:1778.0px;top:773px;font-size:12px;color:#424242;transform:scaleX(1.022)" id="tK3">Add a button</div>
<div class="a" style="left:1865px;top:766px;width:125px;height:24px;border:1px solid #e6cfe8;border-radius:4px;background:#f5f2f4"></div>
<div class="t" style="left:1873.4px;top:773px;font-size:12px;color:#424242;transform:scaleX(0.989)" id="tK4">Add an email screen</div>
<svg style="left:2002px;top:771px" width="15" height="15" viewBox="0 0 15 15"><path class="gi" style="stroke:#424242;stroke-width:1.100" d="M2.600 4.400C3.600 2.700 5.400 1.600 7.500 1.600c3.200 0 5.800 2.600 5.800 5.800s-2.600 5.800-5.800 5.800S1.700 10.600 1.700 7.400M2.400 1.400v3.200h3.200"/></svg>
<!-- input -->
<div class="a" style="left:1734px;top:810px;width:288px;height:100px;border:1px solid #d1d1d1;border-radius:8px;background:#fff"></div>
<div class="t" style="left:1747.4px;top:826px;font-size:14px;color:#707070;transform:scaleX(1.012)" id="tPh">What do you want to do with this app?</div>
<svg style="left:1987px;top:878px" width="19" height="18" viewBox="0 0 19 18"><path class="gi" style="stroke:#424242;stroke-width:1.100" d="M1.600 1.400l16 7.600-16 7.600 2.400-7.600zM4 9h8.600"/></svg>
<!-- bing -->
<svg style="left:1737px;top:926px" width="12" height="16" viewBox="0 0 12 16"><defs><linearGradient id="gBing" x1="0" y1="0" x2="1" y2="1"><stop offset="0" stop-color="#0c59a4"/><stop offset=".5" stop-color="#1b8fe0"/><stop offset="1" stop-color="#2fd0f0"/></linearGradient></defs><path fill="url(#gBing)" d="M.8.600l3.200 1.100v9.200l4.200-2.400-2.100-1-1.300-3.200 6.400 2.300v3.400L4 14.800.8 13z"/></svg>
<div class="t" style="left:1754.8px;top:927px;font-size:14px;color:#242424;transform:scaleX(0.976)" id="tBing">Bing search is enabled</div>
<svg style="left:1899px;top:924px" width="20" height="20" viewBox="0 0 20 20"><path class="gi" style="stroke:#424242;stroke-width:1.100" d="M8.500 1.800h3l.5 2.200 1.600.9 2.100-.7 1.500 2.600-1.600 1.500v1.800l1.600 1.500-1.500 2.600-2.100-.7-1.600.9-.5 2.200h-3l-.5-2.200-1.600-.9-2.100.7-1.500-2.600 1.600-1.500V8.300L2.800 6.800l1.500-2.600 2.100.7L8 4z"/><circle class="gi" style="stroke:#424242;stroke-width:1.100" cx="10" cy="9.300" r="1.900"/></svg>
<div class="t" style="left:1733.4px;top:956px;font-size:10px;color:#242424;transform:scaleX(1.000)" id="tMk">Make sure AI-generated content is accurate and appropriate</div>
</div>

</div>
</body>
</html>
